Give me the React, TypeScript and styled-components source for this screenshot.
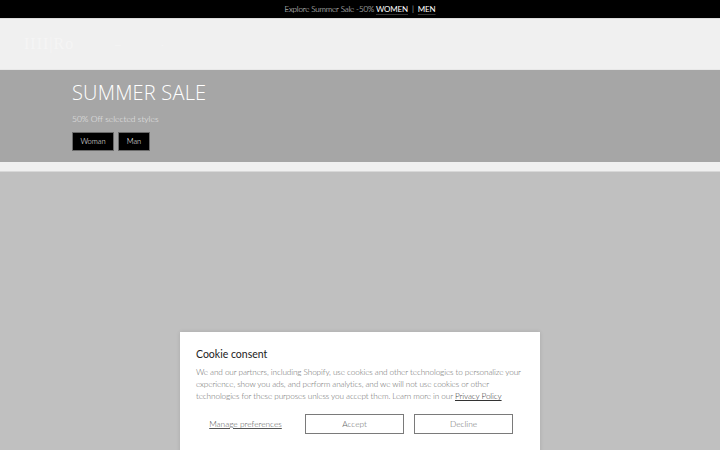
import React from "react";
import styled, { createGlobalStyle } from "styled-components";

const Global = createGlobalStyle`
  html, body { margin: 0; padding: 0; }
  body { font-family: Lato, "Liberation Sans", sans-serif; background: #c0c0c0; }
  * { box-sizing: border-box; }
`;

const Page = styled.div`
  width: 720px;
  height: 450px;
  overflow: hidden;
  display: flex;
  flex-direction: column;
  position: relative;
  background: #c0c0c0;
`;

const TopBar = styled.div`
  height: 18px;
  background: #000;
  color: #e8e8e8;
  display: flex;
  align-items: center;
  justify-content: center;
  font-size: 8px;
  font-weight: 300;
  letter-spacing: -0.15px;
  gap: 2px;
`;

const BarLink = styled.span`
  color: #fff;
  font-weight: 400;
  text-decoration: underline;
  text-decoration-color: #333;
  text-underline-offset: 2px;
`;

const Header = styled.div`
  height: 52px;
  background: #f0f0f0;
  border-top: 1px solid #dcdcdc;
  border-bottom: 1px solid #e8e8e8;
  display: flex;
  align-items: center;
  padding: 0 24px;
  gap: 40px;
`;

const Logo = styled.div`
  color: #f5f5f5;
  font-family: "Liberation Serif", serif;
  font-size: 16px;
  letter-spacing: 1px;
`;

const NavItem = styled.span`
  color: #f5f5f5;
  font-size: 9px;
`;

const Hero = styled.div`
  height: 92px;
  background: #a6a6a6;
  padding: 11px 72px 0;
  display: flex;
  flex-direction: column;
`;

const HeroTitle = styled.h1`
  margin: 0;
  color: #fff;
  font-family: "Open Sans", "Liberation Sans", sans-serif;
  font-weight: 300;
  font-size: 20px;
  line-height: 24px;
  letter-spacing: 0.2px;
`;

const HeroSub = styled.p`
  margin: 9px 0 0;
  color: #ececec;
  font-size: 8.5px;
  font-weight: 300;
  line-height: 10px;
`;

const HeroButtons = styled.div`
  display: flex;
  gap: 4px;
  margin-top: 8px;
`;

const HeroButton = styled.button<{ $w: number }>`
  height: 19px;
  padding: 0 6px;
  background: #000;
  border: 1px solid #6a6a6a;
  color: #fff;
  font-family: Lato, "Liberation Sans", sans-serif;
  font-size: 7.5px;
  font-weight: 300;
  width: ${(p) => p.$w}px;
`;

const Strip = styled.div`
  height: 10px;
  background: #f0f0f0;
  border-bottom: 1px solid #d8d8d8;
`;

const Main = styled.div`
  flex: 1;
  background: #c0c0c0;
`;

const Banner = styled.div`
  position: absolute;
  left: 180px;
  top: 332px;
  width: 360px;
  height: 130px;
  background: #fff;
  box-shadow: 0 0 4px rgba(0, 0, 0, 0.12);
  padding: 15px 16px 0;
`;

const BannerTitle = styled.div`
  font-size: 10.5px;
  color: #222;
  font-weight: 400;
  line-height: 14px;
`;

const BannerText = styled.p`
  margin: 5px 0 0;
  font-size: 8.2px;
  line-height: 12px;
  color: #6a6a6a;
  font-weight: 300;
  letter-spacing: -0.1px;
`;

const Line = styled.span`
  display: block;
  white-space: nowrap;
`;

const Policy = styled.a`
  color: #333;
  text-decoration: underline;
`;

const Actions = styled.div`
  display: grid;
  grid-template-columns: 99px 99px 99px;
  column-gap: 10px;
  margin-top: 12px;
`;

const LinkButton = styled.span`
  height: 20px;
  display: flex;
  align-items: center;
  justify-content: center;
  font-size: 8.3px;
  color: #555;
  text-decoration: underline;
  font-weight: 300;
`;

const OutlineButton = styled.button`
  height: 20px;
  background: #fff;
  border: 1px solid #7a7a7a;
  color: #666;
  font-family: Lato, "Liberation Sans", sans-serif;
  font-size: 8.3px;
  font-weight: 300;
`;

export default function App() {
  return (
    <Page>
      <Global />
      <TopBar>
        Explore Summer Sale -50% <BarLink>WOMEN</BarLink>&nbsp;|&nbsp;<BarLink>MEN</BarLink>
      </TopBar>
      <Header>
        <Logo>IIII|Ro</Logo>
        <NavItem>—</NavItem>
        <NavItem>·</NavItem>
      </Header>
      <Hero>
        <HeroTitle>SUMMER SALE</HeroTitle>
        <HeroSub>50% Off selected styles</HeroSub>
        <HeroButtons>
          <HeroButton $w={42}>Woman</HeroButton>
          <HeroButton $w={32}>Man</HeroButton>
        </HeroButtons>
      </Hero>
      <Strip />
      <Main />
      <Banner>
        <BannerTitle>Cookie consent</BannerTitle>
        <BannerText>
          <Line>We and our partners, including Shopify, use cookies and other technologies to personalize your</Line>
          <Line>experience, show you ads, and perform analytics, and we will not use cookies or other</Line>
          <Line>
            technologies for these purposes unless you accept them. Learn more in our <Policy>Privacy Policy</Policy>
          </Line>
        </BannerText>
        <Actions>
          <LinkButton>Manage preferences</LinkButton>
          <OutlineButton>Accept</OutlineButton>
          <OutlineButton>Decline</OutlineButton>
        </Actions>
      </Banner>
    </Page>
  );
}
